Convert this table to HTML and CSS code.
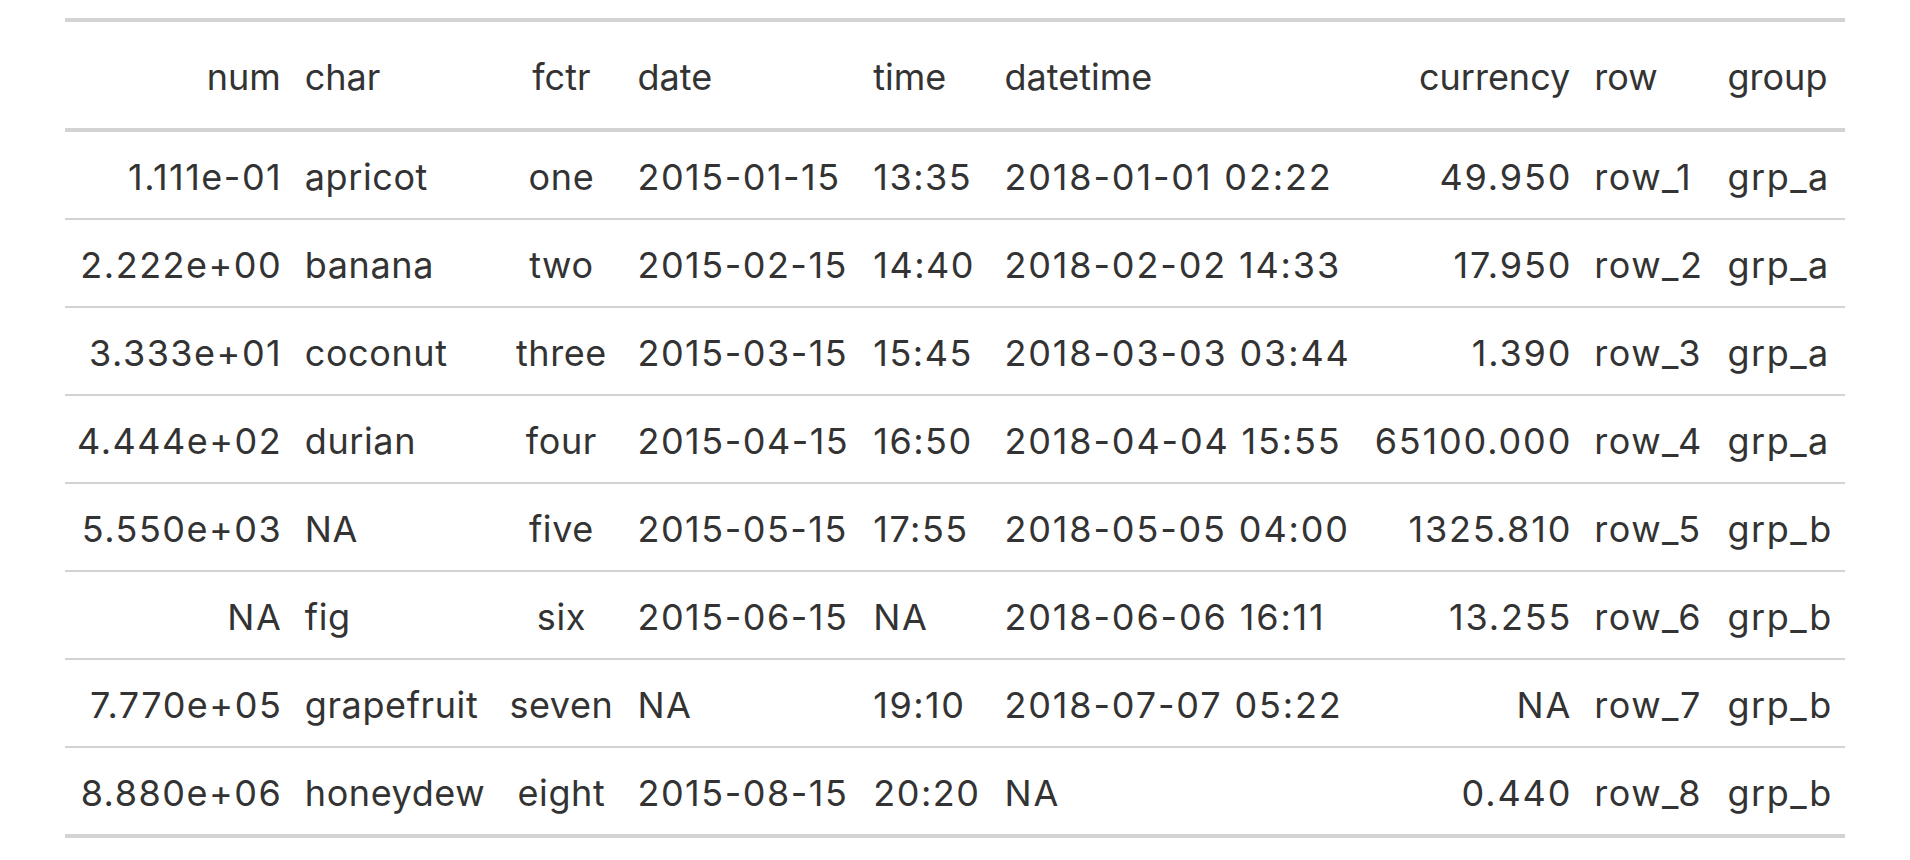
FILE: index.html
```html
<!DOCTYPE html>
<html>
<head>
<meta charset="utf-8">
<link rel="stylesheet" href="styles.css">
</head>
<body>
<table class="gt">
  <thead>
    <tr>
      <th class="r">num</th>
      <th class="l">char</th>
      <th class="c">fctr</th>
      <th class="l">date</th>
      <th class="l">time</th>
      <th class="l">datetime</th>
      <th class="r">currency</th>
      <th class="l">row</th>
      <th class="l">group</th>
    </tr>
  </thead>
  <tbody>
    <tr><td class="r n">1.111e-01</td><td class="l t">apricot</td><td class="c t">one</td><td class="l n">2015-01-15</td><td class="l n">13:35</td><td class="l w">2018-01-01 02:22</td><td class="r w">49.950</td><td class="l u">row_1</td><td class="l u">grp_a</td></tr>
    <tr><td class="r n">2.222e+00</td><td class="l t">banana</td><td class="c t">two</td><td class="l n">2015-02-15</td><td class="l n">14:40</td><td class="l w">2018-02-02 14:33</td><td class="r w">17.950</td><td class="l u">row_2</td><td class="l u">grp_a</td></tr>
    <tr><td class="r n">3.333e+01</td><td class="l t">coconut</td><td class="c t">three</td><td class="l n">2015-03-15</td><td class="l n">15:45</td><td class="l w">2018-03-03 03:44</td><td class="r w">1.390</td><td class="l u">row_3</td><td class="l u">grp_a</td></tr>
    <tr><td class="r n">4.444e+02</td><td class="l t">durian</td><td class="c t">four</td><td class="l n">2015-04-15</td><td class="l n">16:50</td><td class="l w">2018-04-04 15:55</td><td class="r w">65100.000</td><td class="l u">row_4</td><td class="l u">grp_a</td></tr>
    <tr><td class="r n">5.550e+03</td><td class="l t">NA</td><td class="c t">five</td><td class="l n">2015-05-15</td><td class="l n">17:55</td><td class="l w">2018-05-05 04:00</td><td class="r w">1325.810</td><td class="l u">row_5</td><td class="l u">grp_b</td></tr>
    <tr><td class="r n">NA</td><td class="l t">fig</td><td class="c t">six</td><td class="l n">2015-06-15</td><td class="l n">NA</td><td class="l w">2018-06-06 16:11</td><td class="r w">13.255</td><td class="l u">row_6</td><td class="l u">grp_b</td></tr>
    <tr><td class="r n">7.770e+05</td><td class="l t">grapefruit</td><td class="c t">seven</td><td class="l n">NA</td><td class="l n">19:10</td><td class="l w">2018-07-07 05:22</td><td class="r w">NA</td><td class="l u">row_7</td><td class="l u">grp_b</td></tr>
    <tr><td class="r n">8.880e+06</td><td class="l t">honeydew</td><td class="c t">eight</td><td class="l n">2015-08-15</td><td class="l n">20:20</td><td class="l w">NA</td><td class="r w">0.440</td><td class="l u">row_8</td><td class="l u">grp_b</td></tr>
  </tbody>
</table>
</body>
</html>
```

FILE: styles.css
```css
html, body {
  margin: 0;
  padding: 0;
  background: #ffffff;
}

.gt {
  margin: 18px auto 0;
  border-collapse: collapse;
  font-family: Inter, "Liberation Sans", Arial, sans-serif;
  font-size: 36px;
  color: #333333;
  border-top: 4px solid #d3d3d3;
  border-bottom: 4px solid #d3d3d3;
}

.gt th,
.gt td {
  line-height: 44px;
  padding-left: 12px;
  padding-right: 12px;
  white-space: nowrap;
}

.gt th {
  font-weight: normal;
  padding-top: 33px;
  padding-bottom: 29px;
  border-bottom: 4px solid #d3d3d3;
}

.gt td {
  padding-top: 23px;
  padding-bottom: 19px;
}

.gt tbody tr + tr td {
  border-top: 2px solid #d3d3d3;
}

/* per-column letter spacing to approximate the reference system font */
.gt td.t {
  letter-spacing: 0.6px;
}

.gt td.n {
  letter-spacing: 1.5px;
}

.gt td.w {
  letter-spacing: 1.85px;
}

.gt td.u {
  letter-spacing: 1.5px;
}

.gt td.r.n {
  padding-right: 10.5px;
}

.gt td.r.w {
  padding-right: 10px;
}

.r { text-align: right; }
.l { text-align: left; }
.c { text-align: center; }
```
